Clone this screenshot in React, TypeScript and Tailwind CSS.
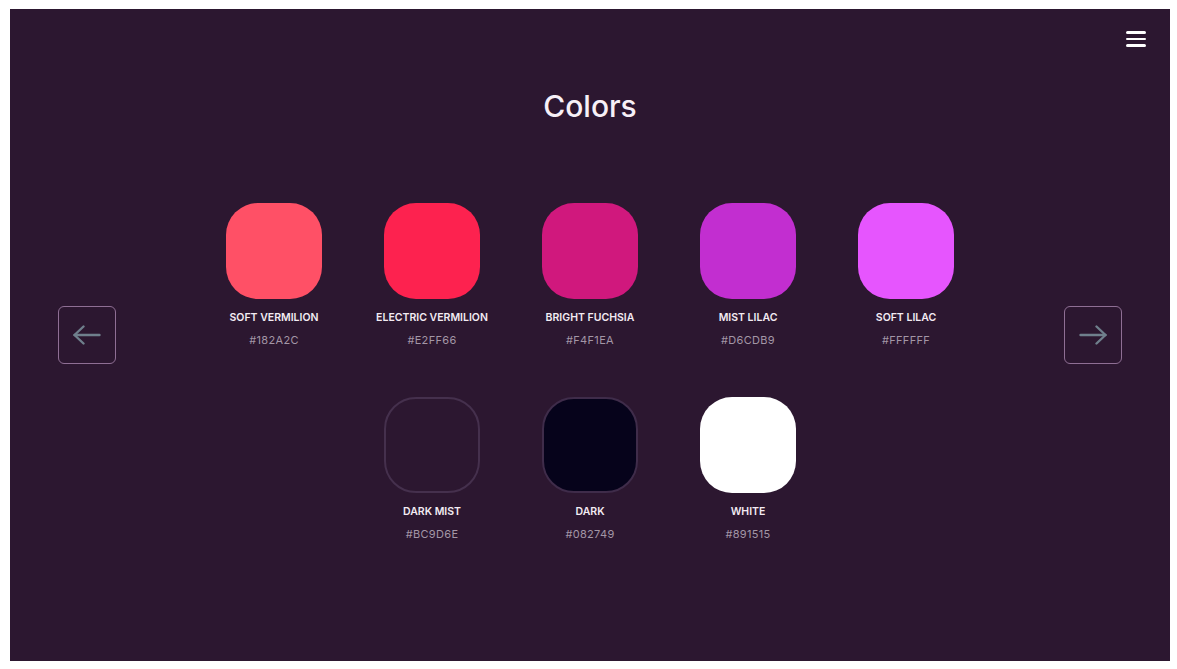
import React from 'react';

type Swatch = {
  name: string;
  hex: string;
  className: string;
};

const topRow: Swatch[] = [
  { name: 'Soft Vermilion', hex: '#182A2C', className: 'bg-[#ff5066]' },
  { name: 'Electric Vermilion', hex: '#E2FF66', className: 'bg-[#fd224f]' },
  { name: 'Bright Fuchsia', hex: '#F4F1EA', className: 'bg-[#d0187d]' },
  { name: 'Mist Lilac', hex: '#D6CDB9', className: 'bg-[#c22ed0]' },
  { name: 'Soft Lilac', hex: '#FFFFFF', className: 'bg-[#e655fe]' },
];

const bottomRow: Swatch[] = [
  { name: 'Dark Mist', hex: '#BC9D6E', className: 'bg-[#2c1730] border-2 border-[#45304d]' },
  { name: 'Dark', hex: '#082749', className: 'bg-[#06031b] border-2 border-[#3f2c4a]' },
  { name: 'White', hex: '#891515', className: 'bg-white' },
];

const ColorItem: React.FC<{ swatch: Swatch }> = ({ swatch }) => (
  <div className="flex w-[158px] flex-col items-center">
    <div className={`h-[96px] w-[96px] rounded-[32px] ${swatch.className}`} />
    <div className="mt-[12px] text-[10.5px] font-semibold uppercase leading-[14px] text-[#f3ebf3]">
      {swatch.name}
    </div>
    <div className="mt-[8px] text-[11px] leading-[14px] tracking-[0.03em] text-[#a396a6]">
      {swatch.hex}
    </div>
  </div>
);

const ArrowButton: React.FC<{ direction: 'left' | 'right' }> = ({ direction }) => (
  <button className="flex h-[58px] w-[58px] shrink-0 items-center justify-center rounded-[6px] border border-[#8f6f94]">
    <svg
      width="28"
      height="20"
      viewBox="0 0 28 20"
      fill="none"
      stroke="#6f7f8c"
      strokeWidth="2.4"
      strokeLinecap="round"
      strokeLinejoin="round"
      className={direction === 'right' ? 'rotate-180' : ''}
    >
      <path d="M26.5 10H1.5" />
      <path d="M10.5 1.5L1.5 10l9 8.5" />
    </svg>
  </button>
);

export default function App() {
  return (
    <div
      className="h-[669px] w-full bg-white pb-[8px] pl-[10px] pr-[7px] pt-[9px]"
      style={{ fontFamily: 'Inter, "Noto Sans", sans-serif' }}
    >
      <div className="relative flex h-full items-center justify-between bg-[#2c1730] px-[48px]">
        {/* menu */}
        <button className="absolute right-[24px] top-[22px] flex w-[20px] flex-col gap-[4px]">
          <span className="h-[2.5px] w-full rounded-full bg-white" />
          <span className="h-[2.5px] w-full rounded-full bg-white" />
          <span className="h-[2.5px] w-full rounded-full bg-white" />
        </button>

        <ArrowButton direction="left" />

        <div className="flex flex-1 flex-col items-center self-stretch pt-[79px]">
          <h1 className="text-[30px] font-medium leading-[36px] text-[#f7f0f7]">Colors</h1>

          <div className="mt-[79px] flex flex-col items-center gap-[50px]">
            <div className="flex">
              {topRow.map((s) => (
                <ColorItem key={s.name} swatch={s} />
              ))}
            </div>
            <div className="flex">
              {bottomRow.map((s) => (
                <ColorItem key={s.name} swatch={s} />
              ))}
            </div>
          </div>
        </div>

        <ArrowButton direction="right" />
      </div>
    </div>
  );
}
